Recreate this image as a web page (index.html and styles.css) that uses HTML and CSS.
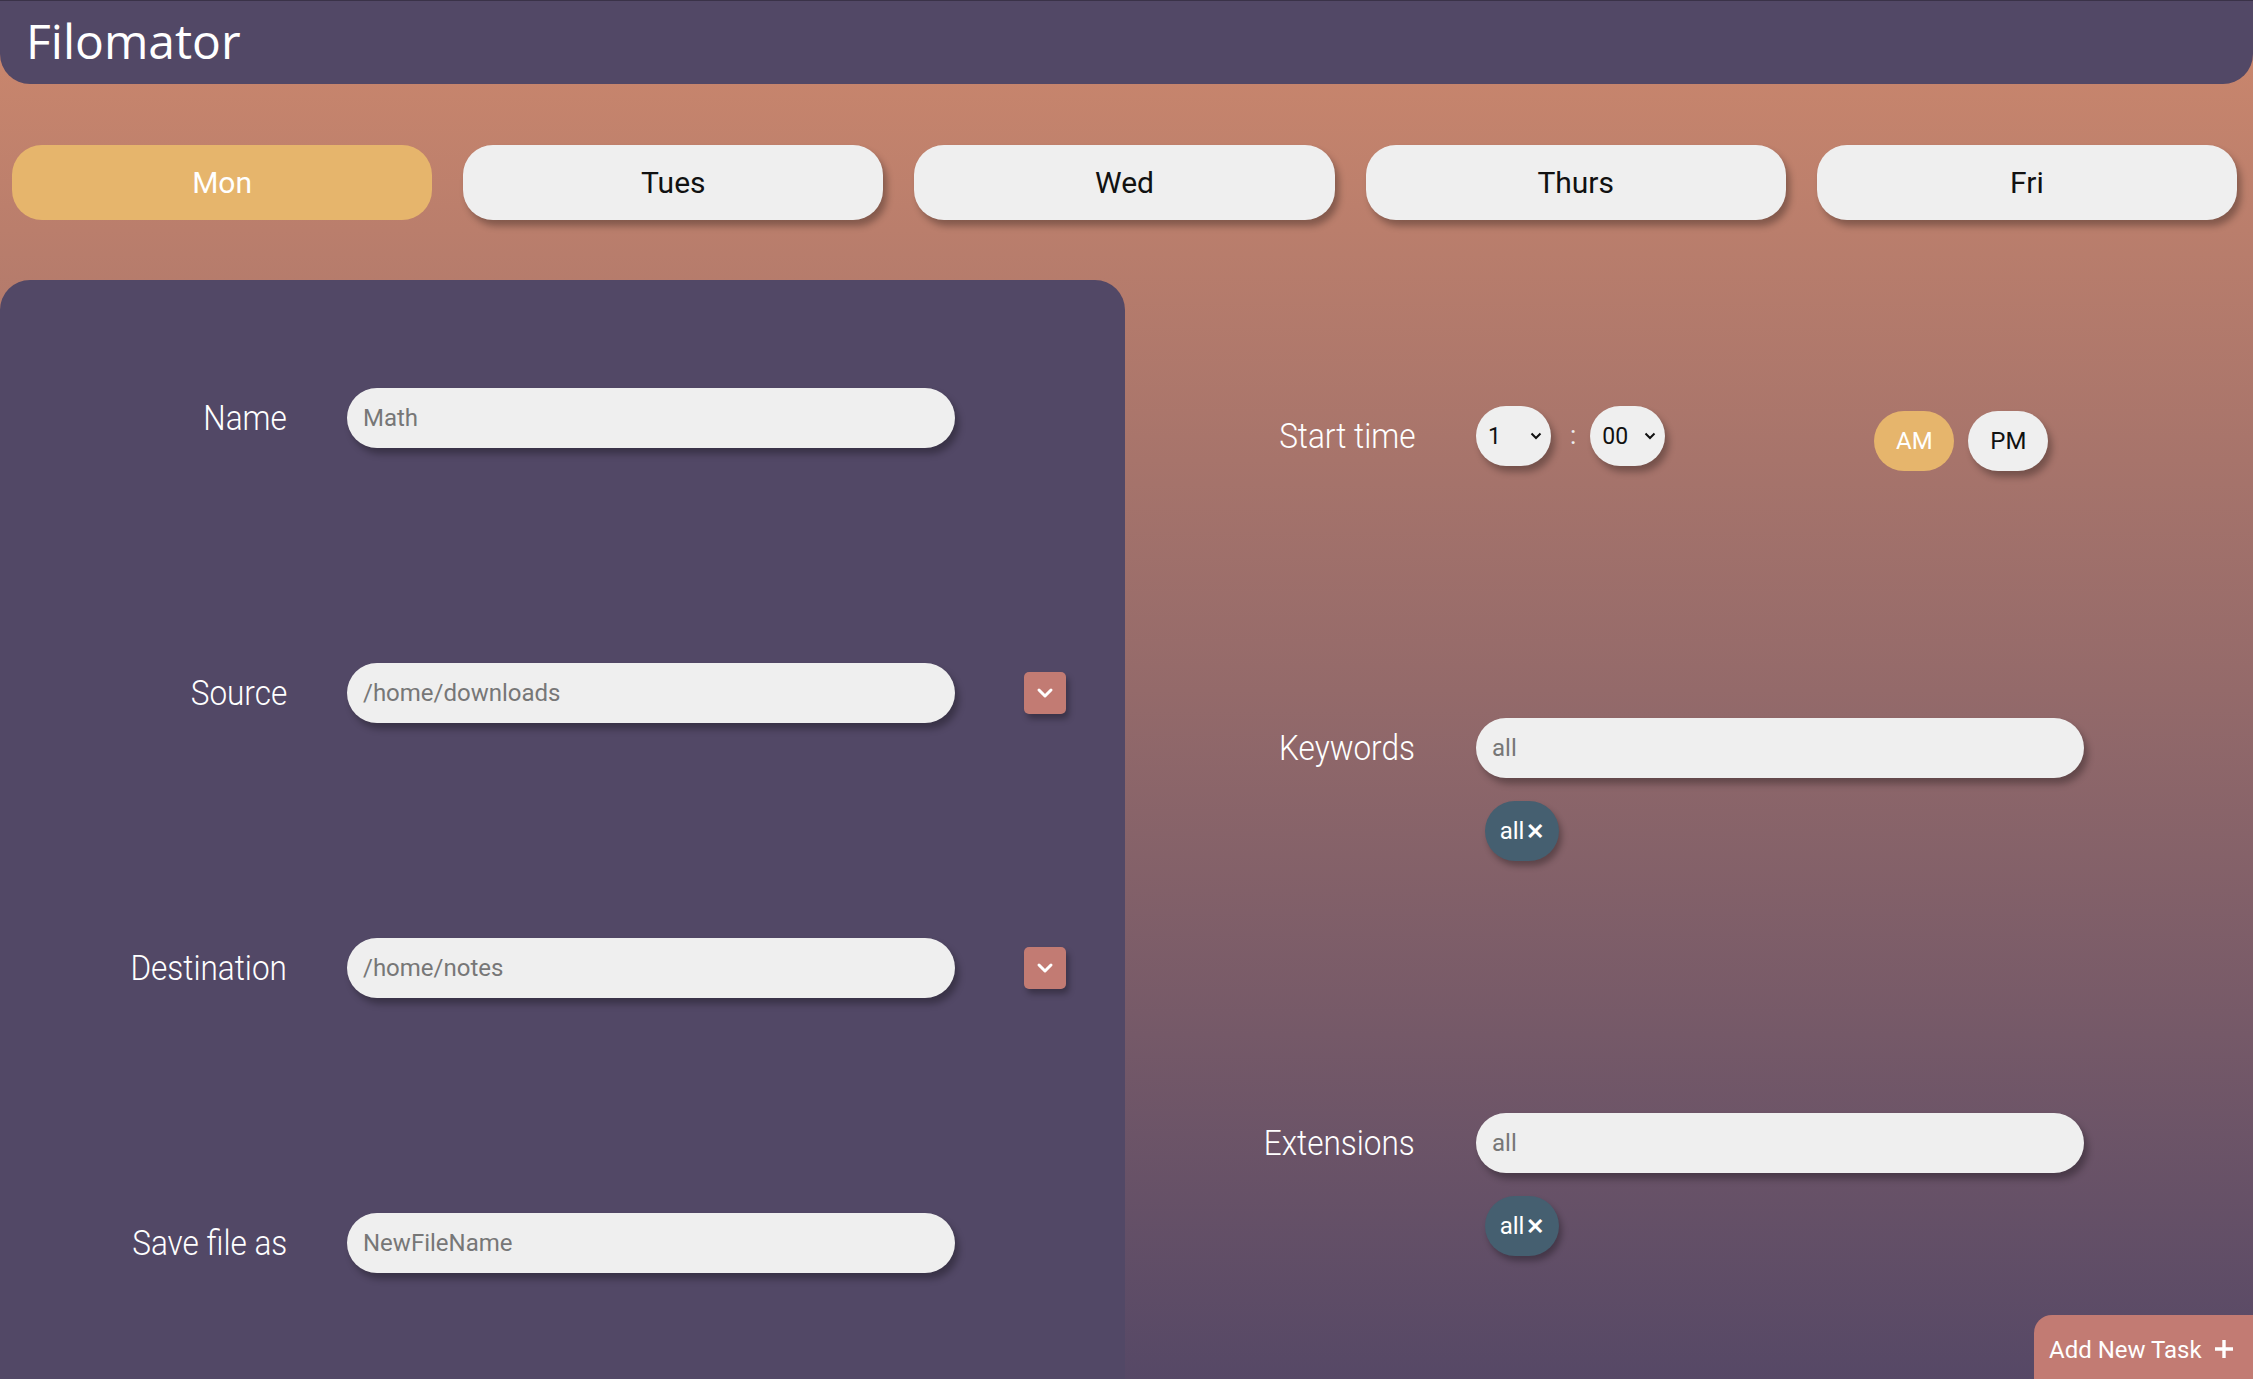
FILE: index.html
```html
<!DOCTYPE html>
<html lang="en">
<head>
<meta charset="utf-8">
<title>Filomator</title>
<link rel="stylesheet" href="styles.css">
</head>
<body>
<header class="topbar"><h1 class="brand">Filomator</h1></header>

<nav class="days">
  <button class="day day-active">Mon</button>
  <button class="day">Tues</button>
  <button class="day">Wed</button>
  <button class="day">Thurs</button>
  <button class="day">Fri</button>
</nav>

<main class="content">
  <section class="panel">
    <div class="field">
      <label class="label"><span class="cond">Name</span></label>
      <div class="input">Math</div>
    </div>
    <div class="field">
      <label class="label"><span class="cond">Source</span></label>
      <div class="input">/home/downloads</div>
      <button class="dd"><svg width="18" height="12" viewBox="0 0 18 12"><polyline points="3,3 9,9 15,3" fill="none" stroke="#fff" stroke-width="3" stroke-linecap="round" stroke-linejoin="round"/></svg></button>
    </div>
    <div class="field">
      <label class="label"><span class="cond">Destination</span></label>
      <div class="input">/home/notes</div>
      <button class="dd"><svg width="18" height="12" viewBox="0 0 18 12"><polyline points="3,3 9,9 15,3" fill="none" stroke="#fff" stroke-width="3" stroke-linecap="round" stroke-linejoin="round"/></svg></button>
    </div>
    <div class="field">
      <label class="label"><span class="cond">Save file as</span></label>
      <div class="input">NewFileName</div>
    </div>
  </section>

  <section class="options">
    <div class="opt-row">
      <label class="label"><span class="cond">Start time</span></label>
      <div class="time">
        <div class="select"><span>1</span><svg width="12" height="8" viewBox="0 0 12 8"><polyline points="1.5,1.5 6,6 10.5,1.5" fill="none" stroke="#111" stroke-width="2"/></svg></div>
        <span class="colon">:</span>
        <div class="select"><span>00</span><svg width="12" height="8" viewBox="0 0 12 8"><polyline points="1.5,1.5 6,6 10.5,1.5" fill="none" stroke="#111" stroke-width="2"/></svg></div>
        <div class="ampm">
          <button class="pill pill-active">AM</button>
          <button class="pill">PM</button>
        </div>
      </div>
    </div>
    <div class="opt-row">
      <label class="label"><span class="cond">Keywords</span></label>
      <div class="input">all</div>
      <div class="chips"><span class="chip">all<b class="x">✕</b></span></div>
    </div>
    <div class="opt-row">
      <label class="label"><span class="cond">Extensions</span></label>
      <div class="input">all</div>
      <div class="chips"><span class="chip">all<b class="x">✕</b></span></div>
    </div>
  </section>
</main>

<button class="add-task">Add New Task<svg width="20" height="20" viewBox="0 0 20 20"><path d="M10 1v18M1 10h18" stroke="#fff" stroke-width="3.4" fill="none"/></svg></button>
</body>
</html>
```

FILE: styles.css
```css
html, body {
  margin: 0;
  height: 100%;
}

body {
  background: linear-gradient(180deg, #cd886d 0%, #946a6a 50%, #564866 100%);
  font-family: Roboto, "Liberation Sans", sans-serif;
  overflow: hidden;
  display: flex;
  flex-direction: column;
}

.topbar {
  flex: none;
  height: 84px;
  box-sizing: border-box;
  border-top: 1px solid #3a3248;
  background: #524866;
  border-radius: 0 0 30px 30px;
  display: flex;
  align-items: center;
  padding-left: 26px;
  padding-bottom: 4px;
}

.brand {
  margin: 0;
  font-family: "Open Sans", sans-serif;
  font-weight: 400;
  font-size: 48px;
  line-height: 1;
  color: #fff;
}

.days {
  flex: none;
  display: flex;
  gap: 31px;
  padding: 0 16px 0 12px;
  margin-top: 61px;
}

.day {
  flex: 1;
  height: 75px;
  border: 0;
  border-radius: 30px;
  background: #efefef;
  box-shadow: 4px 6px 7px rgba(0, 0, 0, 0.3);
  font-family: Roboto, sans-serif;
  font-size: 30px;
  color: #111;
  padding: 0;
}

.day-active {
  background: #e6b56c;
  color: #fff;
  box-shadow: none;
}

.content {
  flex: 1;
  display: grid;
  grid-template-columns: 1125px 1fr;
  margin-top: 60px;
}

.panel {
  background: #524866;
  border-radius: 30px 30px 0 0;
  padding-top: 108px;
  display: flex;
  flex-direction: column;
  gap: 215px;
}

.field {
  display: grid;
  grid-template-columns: 287px 608px 42px;
  column-gap: 60px;
  align-items: center;
}

.label {
  text-align: right;
  color: #fff;
  font-weight: 300;
  font-size: 35px;
  white-space: nowrap;
}

.cond {
  display: inline-block;
  transform: scaleX(0.9);
  transform-origin: right center;
}

.input {
  height: 60px;
  box-sizing: border-box;
  border-radius: 30px;
  background: #efefef;
  box-shadow: 4px 6px 7px rgba(0, 0, 0, 0.3);
  display: flex;
  align-items: center;
  padding-left: 16px;
  font-size: 24px;
  color: #777;
}

.dd {
  margin-left: 9px;
  width: 42px;
  height: 42px;
  border: 0;
  padding: 0;
  border-radius: 5px;
  background: #c27b73;
  box-shadow: 3px 5px 6px rgba(0, 0, 0, 0.3);
  display: flex;
  align-items: center;
  justify-content: center;
}

.options {
  padding-top: 126px;
  display: flex;
  flex-direction: column;
  gap: 252px;
}

.opt-row {
  display: grid;
  grid-template-columns: 290px 608px;
  column-gap: 61px;
  row-gap: 23px;
  align-items: center;
}

.chips {
  grid-column: 2;
  display: flex;
  padding-left: 9px;
}

.chip {
  width: 74px;
  height: 60px;
  border-radius: 30px;
  background: #455f70;
  box-shadow: 3px 5px 6px rgba(0, 0, 0, 0.3);
  color: #fff;
  font-size: 24px;
  display: flex;
  align-items: center;
  justify-content: center;
  gap: 2px;
}

.x {
  font-size: 22px;
  font-weight: 700;
}

.time {
  display: flex;
  align-items: center;
}

.select {
  width: 75px;
  height: 60px;
  box-sizing: border-box;
  border-radius: 30px;
  background: #efefef;
  box-shadow: 4px 6px 7px rgba(0, 0, 0, 0.3);
  display: flex;
  align-items: center;
  justify-content: space-between;
  padding: 0 9px 0 12px;
  font-size: 23px;
  color: #111;
}

.colon {
  color: #eee;
  font-size: 26px;
  margin: -2px 14px 0 19px;
}

.ampm {
  margin: 5px 0 -5px 209px;
  display: flex;
  gap: 14px;
}

.pill {
  width: 80px;
  height: 60px;
  border: 0;
  padding: 0;
  border-radius: 30px;
  background: #efefef;
  box-shadow: 4px 6px 7px rgba(0, 0, 0, 0.3);
  font-family: Roboto, sans-serif;
  font-size: 24px;
  color: #111;
}

.pill-active {
  background: #e6b56c;
  color: #fff;
  box-shadow: none;
}

.add-task {
  position: fixed;
  right: 0;
  bottom: 0;
  width: 219px;
  height: 64px;
  border: 0;
  border-radius: 18px 0 0 0;
  background: #c27b73;
  color: #fff;
  font-family: Roboto, sans-serif;
  font-size: 24px;
  display: flex;
  align-items: flex-start;
  gap: 12px;
  padding: 21px 0 0 15px;
  box-sizing: border-box;
}

.add-task svg {
  margin-top: 3px;
}
```
